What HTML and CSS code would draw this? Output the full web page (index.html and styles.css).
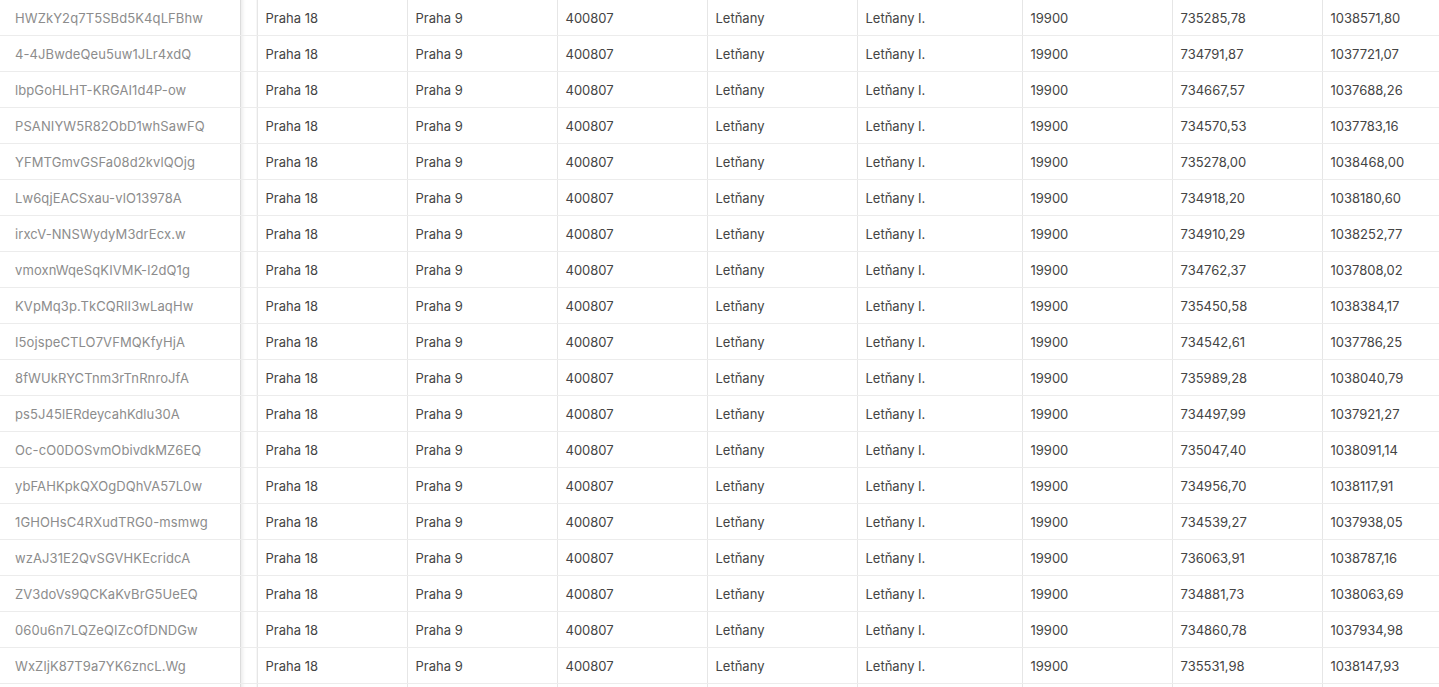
FILE: index.html
```html
<!DOCTYPE html>
<html lang="cs">
<head>
<meta charset="utf-8">
<title>Tabulka</title>
<link rel="stylesheet" href="styles.css">
</head>
<body>
<div class="viewport">
<table class="grid">
<colgroup>
<col class="c-id"><col class="c-gap"><col class="c-std"><col class="c-std"><col class="c-std"><col class="c-std"><col class="c-wide"><col class="c-std"><col class="c-std"><col class="c-std">
</colgroup>
<tbody>
<tr><td class="id">HWZkY2q7T5SBd5K4qLFBhw</td><td class="gap"></td><td>Praha 18</td><td>Praha 9</td><td>400807</td><td>Letňany</td><td>Letňany I.</td><td>19900</td><td>735285,78</td><td>1038571,80</td></tr>
<tr><td class="id">4-4JBwdeQeu5uw1JLr4xdQ</td><td class="gap"></td><td>Praha 18</td><td>Praha 9</td><td>400807</td><td>Letňany</td><td>Letňany I.</td><td>19900</td><td>734791,87</td><td>1037721,07</td></tr>
<tr><td class="id">lbpGoHLHT-KRGAI1d4P-ow</td><td class="gap"></td><td>Praha 18</td><td>Praha 9</td><td>400807</td><td>Letňany</td><td>Letňany I.</td><td>19900</td><td>734667,57</td><td>1037688,26</td></tr>
<tr><td class="id">PSANIYW5R82ObD1whSawFQ</td><td class="gap"></td><td>Praha 18</td><td>Praha 9</td><td>400807</td><td>Letňany</td><td>Letňany I.</td><td>19900</td><td>734570,53</td><td>1037783,16</td></tr>
<tr><td class="id">YFMTGmvGSFa08d2kvlQOjg</td><td class="gap"></td><td>Praha 18</td><td>Praha 9</td><td>400807</td><td>Letňany</td><td>Letňany I.</td><td>19900</td><td>735278,00</td><td>1038468,00</td></tr>
<tr><td class="id">Lw6qjEACSxau-vlO13978A</td><td class="gap"></td><td>Praha 18</td><td>Praha 9</td><td>400807</td><td>Letňany</td><td>Letňany I.</td><td>19900</td><td>734918,20</td><td>1038180,60</td></tr>
<tr><td class="id">irxcV-NNSWydyM3drEcx.w</td><td class="gap"></td><td>Praha 18</td><td>Praha 9</td><td>400807</td><td>Letňany</td><td>Letňany I.</td><td>19900</td><td>734910,29</td><td>1038252,77</td></tr>
<tr><td class="id">vmoxnWqeSqKIVMK-l2dQ1g</td><td class="gap"></td><td>Praha 18</td><td>Praha 9</td><td>400807</td><td>Letňany</td><td>Letňany I.</td><td>19900</td><td>734762,37</td><td>1037808,02</td></tr>
<tr><td class="id">KVpMq3p.TkCQRlI3wLaqHw</td><td class="gap"></td><td>Praha 18</td><td>Praha 9</td><td>400807</td><td>Letňany</td><td>Letňany I.</td><td>19900</td><td>735450,58</td><td>1038384,17</td></tr>
<tr><td class="id">I5ojspeCTLO7VFMQKfyHjA</td><td class="gap"></td><td>Praha 18</td><td>Praha 9</td><td>400807</td><td>Letňany</td><td>Letňany I.</td><td>19900</td><td>734542,61</td><td>1037786,25</td></tr>
<tr><td class="id">8fWUkRYCTnm3rTnRnroJfA</td><td class="gap"></td><td>Praha 18</td><td>Praha 9</td><td>400807</td><td>Letňany</td><td>Letňany I.</td><td>19900</td><td>735989,28</td><td>1038040,79</td></tr>
<tr><td class="id">ps5J45lERdeycahKdlu30A</td><td class="gap"></td><td>Praha 18</td><td>Praha 9</td><td>400807</td><td>Letňany</td><td>Letňany I.</td><td>19900</td><td>734497,99</td><td>1037921,27</td></tr>
<tr><td class="id">Oc-cO0DOSvmObivdkMZ6EQ</td><td class="gap"></td><td>Praha 18</td><td>Praha 9</td><td>400807</td><td>Letňany</td><td>Letňany I.</td><td>19900</td><td>735047,40</td><td>1038091,14</td></tr>
<tr><td class="id">ybFAHKpkQXOgDQhVA57L0w</td><td class="gap"></td><td>Praha 18</td><td>Praha 9</td><td>400807</td><td>Letňany</td><td>Letňany I.</td><td>19900</td><td>734956,70</td><td>1038117,91</td></tr>
<tr><td class="id">1GHOHsC4RXudTRG0-msmwg</td><td class="gap"></td><td>Praha 18</td><td>Praha 9</td><td>400807</td><td>Letňany</td><td>Letňany I.</td><td>19900</td><td>734539,27</td><td>1037938,05</td></tr>
<tr><td class="id">wzAJ31E2QvSGVHKEcridcA</td><td class="gap"></td><td>Praha 18</td><td>Praha 9</td><td>400807</td><td>Letňany</td><td>Letňany I.</td><td>19900</td><td>736063,91</td><td>1038787,16</td></tr>
<tr><td class="id">ZV3doVs9QCKaKvBrG5UeEQ</td><td class="gap"></td><td>Praha 18</td><td>Praha 9</td><td>400807</td><td>Letňany</td><td>Letňany I.</td><td>19900</td><td>734881,73</td><td>1038063,69</td></tr>
<tr><td class="id">060u6n7LQZeQIZcOfDNDGw</td><td class="gap"></td><td>Praha 18</td><td>Praha 9</td><td>400807</td><td>Letňany</td><td>Letňany I.</td><td>19900</td><td>734860,78</td><td>1037934,98</td></tr>
<tr><td class="id">WxZljK87T9a7YK6zncL.Wg</td><td class="gap"></td><td>Praha 18</td><td>Praha 9</td><td>400807</td><td>Letňany</td><td>Letňany I.</td><td>19900</td><td>735531,98</td><td>1038147,93</td></tr>
<tr><td class="id"></td><td class="gap"></td><td></td><td></td><td></td><td></td><td></td><td></td><td></td><td></td></tr>
</tbody>
</table>
</div>
</body>
</html>
```
FILE: styles.css
```css
html, body {
  margin: 0;
  padding: 0;
  background: #ffffff;
}
.viewport {
  width: 1439px;
  height: 687px;
  overflow: hidden;
}
.grid {
  border-collapse: collapse;
  table-layout: fixed;
  width: 1472px;
  font-family: Inter, "Noto Sans", sans-serif;
  font-size: 13px;
  color: #444444;
}
.c-id { width: 240px; }
.c-gap { width: 17px; }
.c-std { width: 150px; }
.c-wide { width: 165px; }
.grid td {
  height: 35px;
  padding: 0 0 0 8px;
  border-bottom: 1px solid #ececec;
  border-left: 1px solid #e6e6e6;
  white-space: nowrap;
  overflow: hidden;
  vertical-align: middle;
  line-height: 16px;
}
.grid td.id {
  padding-left: 15px;
  color: #8c8c8c;
  letter-spacing: 0.1px;
  border-left: none;
  border-right: 1px solid #dcdcdc;
}
.grid td.gap {
  padding: 0;
  border-left: none;
  background: linear-gradient(to right, rgba(0,0,0,0.07), rgba(0,0,0,0) 5px);
}
```
